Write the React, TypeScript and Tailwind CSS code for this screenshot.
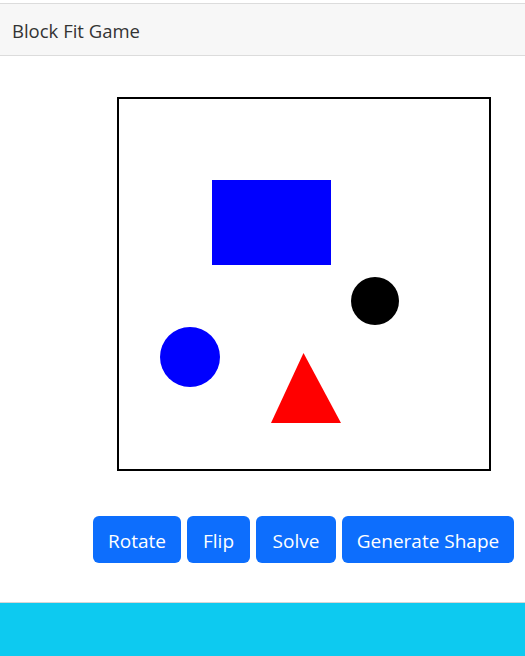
const font = { fontFamily: '"Open Sans", "Noto Sans", sans-serif' };

function Board() {
  return (
    <div className="ml-[117px] w-[374px] h-[374px] border-2 border-black bg-white">
      <svg width="370" height="370" viewBox="0 0 370 370" className="block">
        <rect x="93" y="81" width="119" height="85" fill="#0000ff" />
        <circle cx="256" cy="202" r="24" fill="#000000" />
        <circle cx="71" cy="258" r="30" fill="#0000ff" />
        <polygon points="184.5,254 152,324 222,324" fill="#ff0000" />
      </svg>
    </div>
  );
}

const buttons = [
  { label: "Rotate", w: "w-[88px]" },
  { label: "Flip", w: "w-[63px]" },
  { label: "Solve", w: "w-[80px]" },
  { label: "Generate Shape", w: "w-[172px]" },
];

export default function App() {
  return (
    <div className="min-h-[656px] bg-white flex flex-col text-[#212529]" style={font}>
      <div className="pt-[3px]">
        <div className="h-[53px] border-y border-[#dcdcdc] bg-[#f7f7f7] flex items-center px-3 pt-[2px] text-[18.5px] text-[#333]">
          Block Fit Game
        </div>
      </div>

      <div className="mt-[41px]">
        <Board />
      </div>

      <div className="mt-[45px] ml-[93px] flex gap-[6px]">
        {buttons.map((b) => (
          <button
            key={b.label}
            className={`${b.w} h-[47px] pt-[3px] rounded-md bg-[#0d6efd] text-white text-[19px] leading-none whitespace-nowrap`}
          >
            {b.label}
          </button>
        ))}
      </div>

      <div className="mt-auto h-[54px] border-t border-[#d6d6d6] bg-[#0dcaf0]" />
    </div>
  );
}
